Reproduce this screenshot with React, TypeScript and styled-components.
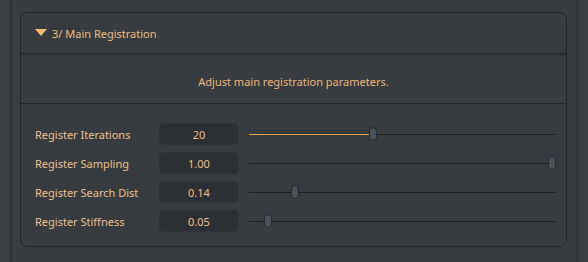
import styled, { createGlobalStyle } from "styled-components";

type ParamType = {
    label: string
    value: string
    fraction: number
    filled?: boolean
}

const params: ParamType[] = [
    { label: 'Register Iterations', value: '20', fraction: 0.4, filled: true },
    { label: 'Register Sampling', value: '1.00', fraction: 1 },
    { label: 'Register Search Dist', value: '0.14', fraction: 0.14 },
    { label: 'Register Stiffness', value: '0.05', fraction: 0.05 },
]

const GlobalStyle = createGlobalStyle`
    html, body {
        margin: 0;
        padding: 0;
        background: #3a3d42;
    }
    body {
        font-family: "Noto Sans", "Open Sans", sans-serif;
    }
`

const Slider = (props: { fraction: number, filled?: boolean }) => {
    const pos = `calc(${props.fraction * 100}% - ${props.fraction * 8}px)`
    return (
        <SliderWrap>
            <Track />
            {props.filled && <Fill style={{ width: pos }} />}
            <Thumb style={{ left: pos }} />
        </SliderWrap>
    )
}

export default function App() {
    return (
        <>
            <GlobalStyle />
            <Frame>
                <Panel>
                    <Header>
                        <Arrow />
                        <Title>3/ Main Registration</Title>
                    </Header>
                    <Description>Adjust main registration parameters.</Description>
                    <Rows>
                        {params.map(p => (
                            <Row key={p.label}>
                                <Label>{p.label}</Label>
                                <ValueBox>{p.value}</ValueBox>
                                <Slider fraction={p.fraction} filled={p.filled} />
                            </Row>
                        ))}
                    </Rows>
                </Panel>
            </Frame>
        </>
    )
}

const Frame = styled.div`
    margin-left: 10px;
    width: 568px;
    height: 262px;
    box-sizing: border-box;
    border-left: 2px solid #2d3034;
    border-right: 1px solid #2d3034;
    padding: 12px 10px 0 8px;
    background: #383b40;
`
const Panel = styled.div`
    border: 1px solid #222529;
    border-radius: 7px;
    background: #383b40;
    padding-bottom: 14px;
`
const Header = styled.div`
    height: 40px;
    display: flex;
    align-items: center;
    padding-left: 14px;
    gap: 5px;
    border-bottom: 1px solid #222529;
    box-shadow: 0 2px 0 #323539;
`
const Arrow = styled.div`
    width: 0;
    height: 0;
    border-left: 6px solid transparent;
    border-right: 6px solid transparent;
    border-top: 7px solid #f6b874;
    margin-top: -2px;
`
const Title = styled.span`
    color: #e9bd86;
    font-size: 11px;
`
const Description = styled.div`
    height: 48px;
    margin-top: 2px;
    display: flex;
    align-items: center;
    justify-content: center;
    color: #e6b77a;
    font-size: 11px;
    border-bottom: 1px solid #222529;
    padding-top: 4px;
    box-sizing: border-box;
`
const Rows = styled.div`
    display: flex;
    flex-direction: column;
    gap: 7px;
    padding: 19px 10px 0 14px;
`
const Row = styled.div`
    display: grid;
    grid-template-columns: 114px 80px 1fr;
    align-items: center;
    column-gap: 10px;
    height: 22px;
`
const Label = styled.span`
    color: #ebc08c;
    font-size: 11px;
`
const ValueBox = styled.div`
    height: 22px;
    border-radius: 5px;
    background: #2c2f33;
    border: 1px solid #303337;
    box-sizing: border-box;
    display: flex;
    align-items: center;
    justify-content: center;
    color: #ebc08c;
    font-size: 11px;
`
const SliderWrap = styled.div`
    position: relative;
    height: 22px;
`
const Track = styled.div`
    position: absolute;
    left: 0;
    right: 0;
    top: 11px;
    height: 1px;
    background: #1c1e21;
`
const Fill = styled.div`
    position: absolute;
    left: 0;
    top: 11px;
    height: 1px;
    background: #f0a04c;
`
const Thumb = styled.div`
    position: absolute;
    top: 4px;
    width: 8px;
    height: 14px;
    box-sizing: border-box;
    border-radius: 4px;
    background: #4b5159;
    border: 1px solid #24272b;
`
